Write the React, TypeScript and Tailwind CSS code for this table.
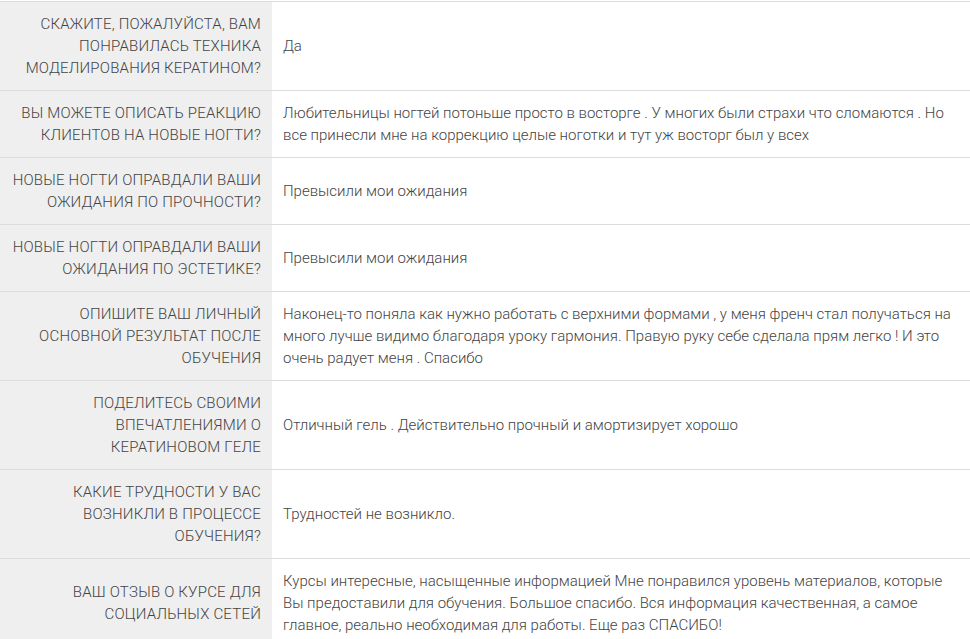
const rows: { q: string; a: string }[] = [
  {
    q: "Скажите, пожалуйста, вам понравилась техника моделирования кератином?",
    a: "Да",
  },
  {
    q: "Вы можете описать реакцию клиентов на новые ногти?",
    a: "Любительницы ногтей потоньше просто в восторге . У многих были страхи что сломаются . Но все принесли мне на коррекцию целые ноготки и тут уж восторг был у всех",
  },
  {
    q: "Новые ногти оправдали ваши ожидания по прочности?",
    a: "Превысили мои ожидания",
  },
  {
    q: "Новые ногти оправдали ваши ожидания по эстетике?",
    a: "Превысили мои ожидания",
  },
  {
    q: "Опишите ваш личный основной результат после обучения",
    a: "Наконец-то поняла как нужно работать с верхними формами , у меня френч стал получаться на много лучше видимо благодаря уроку гармония. Правую руку себе сделала прям легко ! И это очень радует меня . Спасибо",
  },
  {
    q: "Поделитесь своими впечатлениями о кератиновом геле",
    a: "Отличный гель . Действительно прочный и амортизирует хорошо",
  },
  {
    q: "Какие трудности у вас возникли в процессе обучения?",
    a: "Трудностей не возникло.",
  },
  {
    q: "Ваш отзыв о курсе для социальных сетей",
    a: "Курсы интересные, насыщенные информацией Мне понравился уровень материалов, которые Вы предоставили для обучения. Большое спасибо. Вся информация качественная, а самое главное, реально необходимая для работы. Еще раз СПАСИБО!",
  },
];

export default function App() {
  return (
    <div className="w-[970px] h-[639px] overflow-hidden bg-white font-['Roboto',sans-serif] font-light text-[15px] leading-[22px] text-[#444]">
      <div className="border-t border-[#dcdcdc] mt-px">
        {rows.map((r, i) => (
          <div key={i} className="flex border-b border-[#dcdcdc]">
            <div className="w-[272px] shrink-0 bg-[#efefef] pl-[6px] pr-[11px] py-[11px] text-right uppercase tracking-[0.2px] flex items-center justify-end">
              <span>{r.q}</span>
            </div>
            <div className="flex-1 px-[11px] py-[11px] flex items-center">
              <span>{r.a}</span>
            </div>
          </div>
        ))}
      </div>
    </div>
  );
}
